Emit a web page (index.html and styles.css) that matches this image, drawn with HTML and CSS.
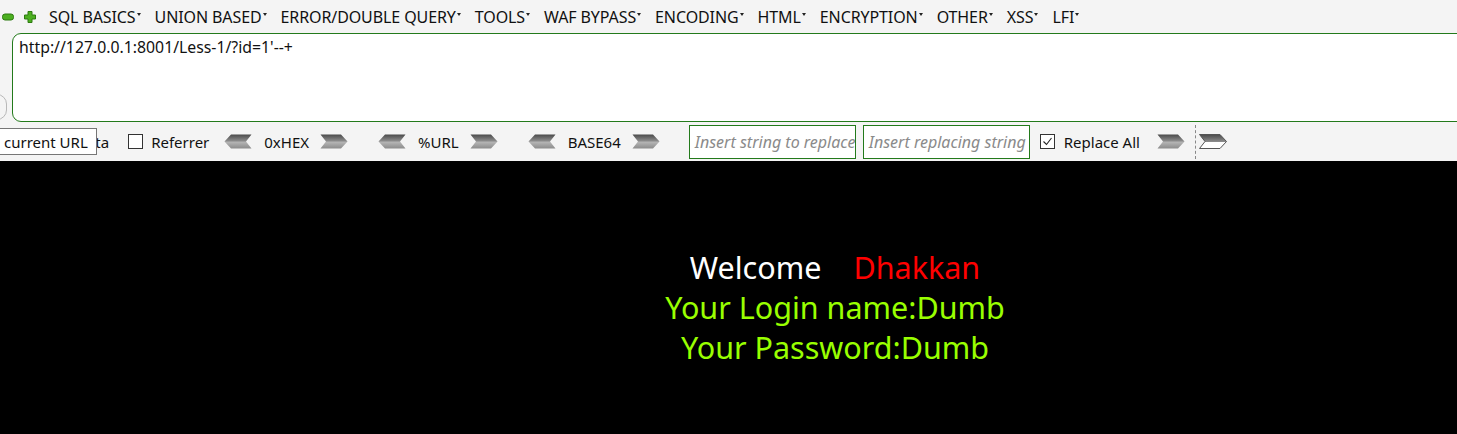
FILE: index.html
```html
<!DOCTYPE html>
<html>
<head>
<meta charset="utf-8">
<link rel="stylesheet" href="styles.css">
</head>
<body>
<div class="toolbar">
  <div class="menubar">
    <span class="ctl">
      <svg width="12" height="8" viewBox="0 0 12 8"><rect x="0.5" y="1" width="11" height="6" rx="2.5" fill="#4caf20" stroke="#2d7a10"/></svg>
    </span>
    <span class="ctl">
      <svg width="12" height="12" viewBox="0 0 12 12"><path d="M4 0.5h4v3.5h3.5v4h-3.5v3.5h-4v-3.5h-3.5v-4h3.5z" fill="#4caf20" stroke="#2d7a10" stroke-linejoin="round"/></svg>
    </span>
    <span class="item">SQL BASICS<i class="dd"></i></span>
    <span class="item">UNION BASED<i class="dd"></i></span>
    <span class="item">ERROR/DOUBLE QUERY<i class="dd"></i></span>
    <span class="item">TOOLS<i class="dd"></i></span>
    <span class="item">WAF BYPASS<i class="dd"></i></span>
    <span class="item">ENCODING<i class="dd"></i></span>
    <span class="item">HTML<i class="dd"></i></span>
    <span class="item">ENCRYPTION<i class="dd"></i></span>
    <span class="item">OTHER<i class="dd"></i></span>
    <span class="item">XSS<i class="dd"></i></span>
    <span class="item">LFI<i class="dd"></i></span>
  </div>
  <div class="urlrow">
    <div class="sidebtn"></div>
    <div class="url">http://127.0.0.1:8001/Less-1/?id=1'--+</div>
  </div>
  <div class="optrow">
    <span class="check hidden"></span><span class="lbl postdata">Post data</span>
    <span class="check referrer"></span><span class="lbl">Referrer</span>
    <span class="enc">
      <svg class="arr" width="28" height="15" viewBox="0 0 28 15"><defs><linearGradient id="g1" x1="0" y1="0" x2="0" y2="1"><stop offset="0" stop-color="#4a4a4a"/><stop offset="0.45" stop-color="#8a8a8a"/><stop offset="0.55" stop-color="#b4b4b4"/><stop offset="1" stop-color="#8c8c8c"/></linearGradient></defs><polygon points="7,0.5 27.5,0.5 22,7.5 27.5,14.5 7,14.5 0.5,7.5" fill="url(#g1)"/></svg>
      <span class="enclbl">0xHEX</span>
      <svg class="arr" width="28" height="15" viewBox="0 0 28 15"><polygon points="0.5,0.5 21,0.5 27.5,7.5 21,14.5 0.5,14.5 6,7.5" fill="url(#g1)"/></svg>
    </span>
    <span class="enc">
      <svg class="arr" width="28" height="15" viewBox="0 0 28 15"><polygon points="7,0.5 27.5,0.5 22,7.5 27.5,14.5 7,14.5 0.5,7.5" fill="url(#g1)"/></svg>
      <span class="enclbl">%URL</span>
      <svg class="arr" width="28" height="15" viewBox="0 0 28 15"><polygon points="0.5,0.5 21,0.5 27.5,7.5 21,14.5 0.5,14.5 6,7.5" fill="url(#g1)"/></svg>
    </span>
    <span class="enc">
      <svg class="arr" width="28" height="15" viewBox="0 0 28 15"><polygon points="7,0.5 27.5,0.5 22,7.5 27.5,14.5 7,14.5 0.5,7.5" fill="url(#g1)"/></svg>
      <span class="enclbl">BASE64</span>
      <svg class="arr" width="28" height="15" viewBox="0 0 28 15"><polygon points="0.5,0.5 21,0.5 27.5,7.5 21,14.5 0.5,14.5 6,7.5" fill="url(#g1)"/></svg>
    </span>
    <span class="field">Insert string to replace</span>
    <span class="field">Insert replacing string</span>
    <span class="check checked"><svg width="11" height="11" viewBox="0 0 11 11"><path d="M1.5 5.5l3 3 5-6.5" fill="none" stroke="#222" stroke-width="1.1"/></svg></span><span class="lbl ra">Replace All</span>
    <svg class="arr go" width="28" height="15" viewBox="0 0 28 15"><polygon points="0.5,0.5 21,0.5 27.5,7.5 21,14.5 0.5,14.5 6,7.5" fill="url(#g1)"/></svg>
    <span class="sep"></span>
    <svg class="arr" width="28" height="15" viewBox="0 0 28 15"><defs><linearGradient id="g2" x1="0" y1="0" x2="0" y2="1"><stop offset="0" stop-color="#4a4a4a"/><stop offset="0.5" stop-color="#8a8a8a"/><stop offset="0.5" stop-color="#ffffff"/><stop offset="1" stop-color="#ffffff"/></linearGradient></defs><polygon points="0.5,0.5 21,0.5 27.5,7.5 21,14.5 0.5,14.5 6,7.5" fill="url(#g2)" stroke="#555" stroke-width="1"/></svg>
    <span class="tooltip">current URL</span>
  </div>
</div>
<div class="page">
  <div class="result">
    <div><span class="welcome">Welcome</span><span class="name">Dhakkan</span></div>
    <div class="ok">Your Login name:Dumb</div>
    <div class="ok">Your Password:Dumb</div>
  </div>
</div>
</body>
</html>
```
FILE: styles.css
```css
html, body {
  margin: 0;
  padding: 0;
  background: #000;
  overflow: hidden;
}
body {
  font-family: "Noto Sans", "Open Sans", "Liberation Sans", sans-serif;
  width: 1457px;
  height: 434px;
}
.toolbar {
  background: #f4f4f4;
  height: 161px;
  position: relative;
  overflow: hidden;
}
.menubar {
  height: 33px;
  display: flex;
  align-items: center;
  font-size: 16px;
  color: #111;
  padding-left: 2px;
}
.ctl {
  display: flex;
  width: 22px;
  align-items: center;
}
.ctl + .ctl { width: 25px; }
.item {
  display: flex;
  align-items: center;
  margin-right: 14px;
  letter-spacing: -0.1px;
  white-space: nowrap;
}
.dd {
  display: inline-block;
  width: 0;
  height: 0;
  border-left: 2.5px solid transparent;
  border-right: 2.5px solid transparent;
  border-top: 3px solid #222;
  margin-left: 1px;
  margin-top: -4px;
}
.urlrow {
  display: flex;
  align-items: flex-start;
  height: 89px;
}
.sidebtn {
  width: 18px;
  height: 24px;
  margin-left: -13px;
  margin-top: 61px;
  border: 1px solid #b8b8b8;
  border-radius: 10px;
  background: #f4f4f4;
  flex: none;
}
.url {
  margin-left: 5px;
  width: 1480px;
  flex: none;
  background: #fff;
  border: 1.5px solid #237a1b;
  border-radius: 9px 0 0 9px;
  font-size: 15.8px;
  color: #111;
  padding: 2px 6px;
  box-sizing: border-box;
  height: 89px;
}
.optrow {
  height: 39px;
  display: flex;
  align-items: center;
  font-size: 15px;
  color: #111;
  white-space: nowrap;
}
.check {
  width: 15px;
  height: 15px;
  box-sizing: border-box;
  border: 1px solid #333;
  background: #fff;
  display: flex;
  align-items: center;
  justify-content: center;
  flex: none;
}
.hidden { margin-left: 20px; }
.referrer { margin-left: 19px; }
.lbl { margin-left: 8px; }
.ra { margin-left: 9px; }
.enc {
  display: flex;
  align-items: center;
  margin-left: 15px;
}
.enc + .enc { margin-left: 30px; }
.arr { flex: none; display: block; }
.enclbl { margin: 0 11px 0 12px; }
.field {
  width: 167px;
  height: 34px;
  box-sizing: border-box;
  border: 1px solid #237a1b;
  background: #fff;
  font-style: italic;
  color: #8a8a8a;
  font-size: 16px;
  display: flex;
  align-items: center;
  padding-left: 5px;
  white-space: nowrap;
  overflow: hidden;
  margin-left: 29px;
  flex: none;
}
.field + .field { margin-left: 7px; }
.checked { margin-left: 10px; }
.go { margin-left: 17px; }
.sep {
  width: 0;
  height: 34px;
  border-left: 1px dashed #888;
  margin: 0 3px 0 10px;
}
.tooltip {
  position: absolute;
  left: 0;
  top: 128px;
  width: 97px;
  height: 27px;
  box-sizing: border-box;
  border: 1px solid #767676;
  border-left: none;
  background: #fff;
  font-size: 15px;
  color: #111;
  padding-left: 4px;
  display: flex;
  align-items: center;
}
.page {
  background: #000;
  padding-top: 86px;
  padding-left: 213px;
}
.result {
  text-align: center;
  font-size: 30.5px;
  line-height: 40px;
  color: #99ff00;
}
.welcome { color: #fff; margin-right: 32px; }
.name { color: #ff0000; }
```
